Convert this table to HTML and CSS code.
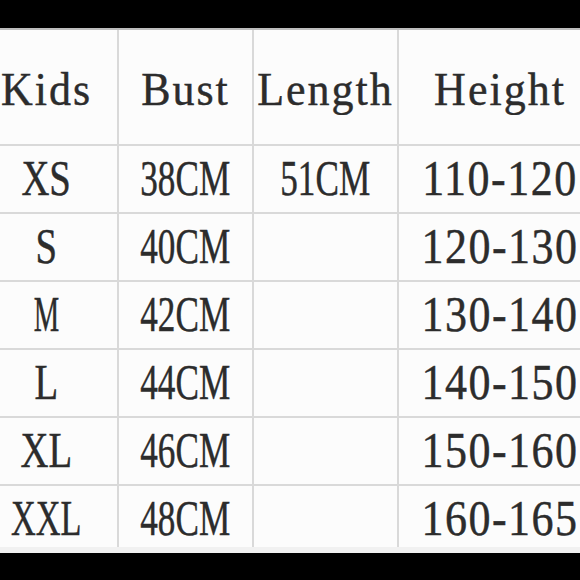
FILE: index.html
```html
<!DOCTYPE html>
<html>
<head>
<meta charset="utf-8">
<link rel="stylesheet" href="styles.css">
</head>
<body>
<div class="frame">
  <div class="bar bar-top"></div>
  <div class="sheet">
    <table class="sizes">
      <colgroup>
        <col class="c1"><col class="c2"><col class="c3"><col class="c4">
      </colgroup>
      <thead>
        <tr class="head">
          <th><span class="h">Kids</span></th>
          <th><span class="h">Bust</span></th>
          <th><span class="h">Length</span></th>
          <th><span class="h">Height</span></th>
        </tr>
      </thead>
      <tbody>
        <tr><td><span class="sz">XS</span></td><td><span class="cm">38CM</span></td><td><span class="cm">51CM</span></td><td><span class="rg">110-120</span></td></tr>
        <tr><td><span class="sz">S</span></td><td><span class="cm">40CM</span></td><td></td><td><span class="rg">120-130</span></td></tr>
        <tr><td><span class="sz sz-m">M</span></td><td><span class="cm">42CM</span></td><td></td><td><span class="rg">130-140</span></td></tr>
        <tr><td><span class="sz">L</span></td><td><span class="cm">44CM</span></td><td></td><td><span class="rg">140-150</span></td></tr>
        <tr><td><span class="sz">XL</span></td><td><span class="cm">46CM</span></td><td></td><td><span class="rg">150-160</span></td></tr>
        <tr><td><span class="sz sz-wide">XXL</span></td><td><span class="cm">48CM</span></td><td></td><td><span class="rg">160-165</span></td></tr>
      </tbody>
    </table>
  </div>
  <div class="bar bar-bottom"></div>
</div>
</body>
</html>
```
FILE: styles.css
```css
html, body {
  margin: 0;
  padding: 0;
  background: #000;
}
.frame {
  width: 580px;
  height: 580px;
  display: flex;
  flex-direction: column;
  overflow: hidden;
}
.bar {
  background: #000;
  flex: none;
}
.bar-top { height: 28px; }
.bar-bottom { height: 27px; }
.sheet {
  flex: 1;
  background: #fcfcfc;
  overflow: hidden;
  border-top: 2px solid #bdbdbd;
  border-bottom: 6px solid #f1f1f1;
  box-sizing: border-box;
}
.sizes {
  border-collapse: collapse;
  table-layout: fixed;
  width: 626px;
  margin-left: -24px;
  margin-top: -2px;
  font-family: "Liberation Serif", "Times New Roman", serif;
  font-size: 44px;
  line-height: 1;
  color: #2c2c2c;
}
.c1 { width: 142px; }
.c2 { width: 135px; }
.c3 { width: 145px; }
.c4 { width: 204px; }
.sizes th, .sizes td {
  border: 2px solid #d9d9d9;
  text-align: center;
  padding: 0;
  font-weight: normal;
  white-space: nowrap;
  overflow: hidden;
}
.sizes tr:first-child th { border-top: none; }
.sizes th:first-child, .sizes td:first-child { border-left: none; }
.head { height: 117px; }
.head th { padding-top: 8px; }
tbody tr { height: 68px; }
tbody td { padding-top: 16px; }
.h, .sz, .cm, .rg {
  display: inline-block;
  -webkit-text-stroke: 0.4px #2c2c2c;
}
.h {
  letter-spacing: 2px;
  transform: scaleY(1.04);
}
.sz { transform: scale(0.88, 1.14); }
.sz-m { transform: scale(0.65, 1.14); }
.sz-wide { transform: scale(0.78, 1.14); }
.cm { transform: scale(0.8, 1.14); }
.rg {
  letter-spacing: 1.5px;
  transform: scaleY(1.14);
}
```
